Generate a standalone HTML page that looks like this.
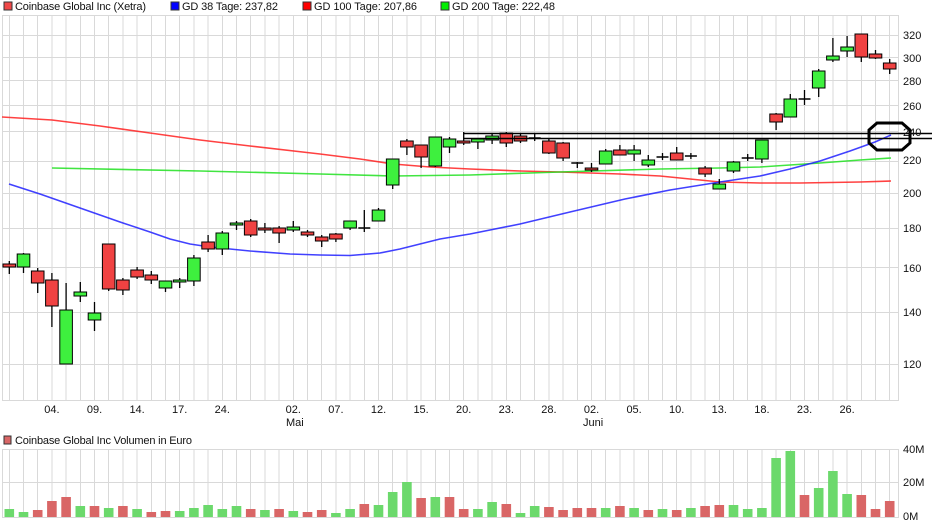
<!DOCTYPE html>
<html><head><meta charset="utf-8"><style>
body{margin:0;width:940px;height:526px;background:#fff;overflow:hidden;font-family:"Liberation Sans",sans-serif}
svg{display:block}
text{font-family:"Liberation Sans",sans-serif;font-size:11px;fill:#111}
</style></head><body>
<svg id="s" width="940" height="526" xmlns="http://www.w3.org/2000/svg">
<g id="grid" stroke="#d9d9d9" stroke-width="1" shape-rendering="crispEdges"></g>
<g fill="none" stroke-width="1.6" stroke-linejoin="round">
<polyline stroke="#ff2020" stroke-opacity="0.85" points="2,117 52,120 100,126 150,133 200,140 250,146 320,154 360,159 393,164 430,167 470,169 520,171 560,172 620,174 660,176 690,179 720,182 760,183 800,183 860,182 891,181"/>
<polyline stroke="#20e020" stroke-opacity="0.85" points="52,168 200,171 320,174 393,176 470,175 560,172 660,169 720,168 760,167 790,165 820,163 860,160 891,158"/>
<polyline stroke="#2020ff" stroke-opacity="0.85" points="9,184 40,194 80,208 120,222 150,232 170,239 190,244 210,247 250,251 290,254 320,255 350,255.5 380,253 400,249 420,244 440,239 470,234 520,224 570,212 625,199 670,190 720,182 760,176 790,169 820,161 850,151 875,142 891,135"/>
</g>
<g id="c"></g>
<g stroke="#000" stroke-width="1.5"><line x1="463" y1="133.5" x2="932" y2="133.5"/><line x1="463" y1="138.5" x2="932" y2="138.5"/></g>
<polygon points="877,123 902,123 910,130 910,143 902,150 877,150 869,143 869,130" fill="none" stroke="#000" stroke-width="3"/>
<g id="v"></g>
<g id="t">
<rect x="4" y="2" width="8" height="8" fill="#f04848" stroke="#333"/><text x="15" y="10" textLength="131">Coinbase Global Inc (Xetra)</text>
<rect x="171" y="2" width="8" height="8" fill="#0000ff" stroke="#333"/><text x="182" y="10" textLength="96">GD 38 Tage: 237,82</text>
<rect x="303" y="2" width="8" height="8" fill="#ff0000" stroke="#333"/><text x="314" y="10" textLength="103">GD 100 Tage: 207,86</text>
<rect x="441" y="2" width="8" height="8" fill="#00ee00" stroke="#333"/><text x="452" y="10" textLength="103">GD 200 Tage: 222,48</text>
<rect x="4" y="436" width="7" height="8" fill="#d96666" stroke="#333"/><text x="15" y="444" textLength="177">Coinbase Global Inc Volumen in Euro</text>
<text x="903" y="39">320</text><text x="903" y="62">300</text><text x="903" y="85">280</text><text x="903" y="110">260</text><text x="903" y="136">240</text><text x="903" y="164">220</text><text x="903" y="197">200</text><text x="903" y="232">180</text><text x="903" y="272">160</text><text x="903" y="316">140</text><text x="903" y="368">120</text>
<text x="903" y="453">40M</text><text x="903" y="486">20M</text><text x="903" y="520">0M</text>
<text x="286" y="426">Mai</text><text x="583" y="426">Juni</text>
</g>
</svg>
<script>
var NS="http://www.w3.org/2000/svg";
function el(p,n,a){var e=document.createElementNS(NS,n);for(var k in a)e.setAttribute(k,a[k]);p.appendChild(e);return e;}
var X=function(i){return 9.3+14.2*i;};
var g=document.getElementById('grid');
el(g,'rect',{x:2.5,y:15.5,width:896,height:385,fill:'none'});
for(var i=0;i<63;i++){el(g,'line',{x1:X(i),y1:15,x2:X(i),y2:400});el(g,'line',{x1:X(i),y1:449,x2:X(i),y2:518});}
for(var p=340;p>=110;p-=20){var y=Math.round(35+335.4*Math.log(320/p))+.5;if(y>15&&y<400)el(g,'line',{x1:2,y1:y,x2:898,y2:y});}
el(g,'rect',{x:2.5,y:449.5,width:896,height:68,fill:'none'});
el(g,'line',{x1:2,y1:482.5,x2:898,y2:482.5});
var C=[['r',261,264,267,274],['g',253,254,267,273],['r',268,271,283,293],['r',273,280,306,327],['g',283,310,364,364],['g',282,292,296,302],['g',302,313,320,331],['r',244,244,289,291],['r',278,280,290,295],['r',267,270,277,279],['r',271,275,280,284],['g',281,281,288,292],['g',278,280,282,288],['g',255,258,281,286],['r',235,242,249,252],['g',231,233,249,255],['g',221,223,225,230],['r',219,221,235,237],['r',223,228,230,233],['r',226,228,233,243],['g',221,227,230,232],['r',230,232,235,237],['r',235,237,241,247],['r',233,234,239,242],['g',221,221,228,230],['d',210,228,228,232],['g',208,210,221,221],['g',159,159,185,189],['r',139,141,147,155],['r',145,145,157,168],['g',137,137,166,167],['g',137,139,147,153],['r',132,141,142,145],['g',139,139,142,149],['g',133,136,140,144],['r',132,133,143,147],['r',134,136,141,143],['d',133,138,138,141],['r',138,141,153,154],['r',142,143,158,161],['d',162,163,163,168],['r',163,168,170,172],['g',149,151,164,164],['r',145,150,155,155],['g',145,150,154,161],['g',155,160,165,167],['d',153,157,157,160],['r',147,153,160,160],['d',153,156,156,159],['r',166,168,174,177],['g',179,184,189,189],['g',161,162,171,173],['d',154,158,158,161],['g',140,140,159,163],['r',113,114,122,130],['g',94,99,117,117],['d',90,99,99,105],['g',69,71,88,97],['g',38,56,60,62],['g',36,47,51,57],['r',34,34,57,62],['r',50,54,58,59],['r',59,63,69,74]];
var c=document.getElementById('c');
C.forEach(function(d,i){var x=X(i);el(c,'line',{x1:x,y1:d[1],x2:x,y2:d[4],stroke:'#000','stroke-width':1.3});
 if(d[0]=='d'){el(c,'line',{x1:x-6,y1:d[2],x2:x+6,y2:d[2],stroke:'#000','stroke-width':1.5});}
 else{var h=Math.max(d[3]-d[2],2);el(c,'rect',{x:x-6.3,y:d[2],width:12.6,height:h,fill:d[0]=='r'?'#f04242':'#3ef03e',stroke:'#000','stroke-width':1});}});
var V=[['g',8],['g',5],['r',7],['r',16],['r',20],['g',11],['r',11],['g',9],['r',11],['g',8],['r',5],['r',6],['g',6],['g',9],['g',12],['g',8],['g',11],['r',8],['g',7],['r',8],['g',6],['r',5],['r',7],['g',4],['g',8],['r',13],['g',12],['g',25],['g',35],['r',19],['g',20],['r',20],['r',8],['g',8],['g',15],['r',13],['g',4],['g',11],['r',10],['r',7],['r',9],['r',9],['g',9],['r',11],['g',9],['r',7],['g',8],['r',7],['g',9],['r',11],['r',12],['g',12],['g',8],['g',9],['g',59],['g',66],['r',22],['g',29],['g',46],['g',23],['r',22],['r',8],['r',16]];
var v=document.getElementById('v');
V.forEach(function(d,i){el(v,'rect',{x:X(i)-4.8,y:517-d[1],width:9.6,height:d[1],fill:d[0]=='r'?'#d96666':'#6cd96c'});});
var L=[[3,'04.'],[6,'09.'],[9,'14.'],[12,'17.'],[15,'24.'],[20,'02.'],[23,'07.'],[26,'12.'],[29,'15.'],[32,'20.'],[35,'23.'],[38,'28.'],[41,'02.'],[44,'05.'],[47,'10.'],[50,'13.'],[53,'18.'],[56,'23.'],[59,'26.']];
var t=document.getElementById('t');
L.forEach(function(l){var e=el(t,'text',{x:X(l[0]),y:413,'text-anchor':'middle'});e.textContent=l[1];});
</script>
</body></html>
